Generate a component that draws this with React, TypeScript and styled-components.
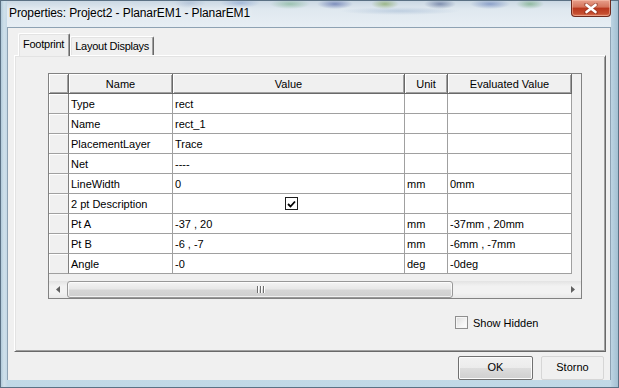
import React from "react";
import styled, { createGlobalStyle } from "styled-components";

const GlobalStyle = createGlobalStyle`
  html, body {
    margin: 0;
    padding: 0;
    background: #dde7ef;
  }
  body {
    font-family: "Liberation Sans", Arial, sans-serif;
  }
`;

const WindowSC = styled.div`
  width: 619px;
  height: 388px;
  box-sizing: border-box;
  padding: 0 8px 8px 7px;
  display: flex;
  flex-direction: column;
  overflow: hidden;
  background:
    radial-gradient(ellipse 18px 5px at 335px 4px, rgba(70, 90, 160, 0.6), transparent),
    radial-gradient(ellipse 14px 5px at 385px 4px, rgba(110, 150, 60, 0.55), transparent),
    radial-gradient(ellipse 16px 5px at 440px 4px, rgba(60, 80, 130, 0.55), transparent),
    radial-gradient(ellipse 20px 5px at 490px 4px, rgba(70, 100, 170, 0.5), transparent),
    radial-gradient(ellipse 14px 5px at 530px 4px, rgba(80, 150, 90, 0.5), transparent),
    radial-gradient(ellipse 20px 5px at 240px 3px, rgba(120, 150, 200, 0.5), transparent),
    radial-gradient(ellipse 20px 5px at 290px 4px, rgba(90, 160, 110, 0.45), transparent),
    radial-gradient(ellipse 16px 5px at 190px 3px, rgba(150, 170, 200, 0.45), transparent),
    radial-gradient(ellipse 60px 4px at 400px 11px, rgba(150, 175, 205, 0.45), transparent),
    linear-gradient(90deg, #a9c4d6 0, #cfe0ea 4px, #c4d8e6 7px, transparent 7px, transparent 611px, #bcd3e2 611px, #9fbdd0 619px),
    linear-gradient(180deg, #c8d6e2 0, #dfe8ef 9px, #e7eef4 27px, #d3e3ee 200px, #c0d8e6 388px);
  box-shadow: inset 0 0 0 1px #5b7184;
`;

const TitleBarSC = styled.div`
  height: 27px;
  flex: none;
  display: flex;
  align-items: flex-start;
  justify-content: space-between;
`;

const TitleTextSC = styled.div`
  padding: 6px 0 0 2px;
  font-size: 12px;
  color: #000;
  letter-spacing: -0.1px;
  text-shadow: 0 0 6px rgba(255, 255, 255, 0.9);
`;

const CloseButtonSC = styled.div`
  width: 40px;
  height: 17px;
  box-sizing: border-box;
  border: 1px solid #6e2a1e;
  border-top: none;
  border-radius: 0 0 4px 4px;
  background: linear-gradient(180deg, #e8a08c 0, #d4735a 45%, #b8361c 50%, #c54e30 85%, #dc7a5c 100%);
  display: flex;
  align-items: center;
  justify-content: center;
  box-shadow: inset 0 0 0 1px rgba(255, 210, 190, 0.45);
`;

const ClientSC = styled.div`
  flex: 1;
  box-sizing: border-box;
  border: 1px solid #8ea2b3;
  border-bottom: none;
  background: #f0f0f0;
  padding: 5px 4px 0 6px;
  display: flex;
  flex-direction: column;
  overflow: hidden;
`;

const TabStripSC = styled.div`
  height: 22px;
  display: flex;
  align-items: flex-end;
  padding-left: 4px;
  position: relative;
  z-index: 1;
`;

const TabSC = styled.div<{ $active?: boolean }>`
  box-sizing: border-box;
  height: ${({ $active }) => ($active ? 23 : 19)}px;
  margin-bottom: ${({ $active }) => ($active ? -1 : 0)}px;
  padding: ${({ $active }) => ($active ? "4px 5px 0 4px" : "3px 4px 0 4px")};
  font-size: 11px;
  letter-spacing: -0.25px;
  color: #000;
  background: #f0f0f0;
  border-top: 1px solid #fff;
  border-left: 1px solid #fff;
  border-right: 1px solid #696969;
  border-radius: 2px 2px 0 0;
  box-shadow: inset -1px 0 0 #a0a0a0, inset 1px 1px 0 #e3e3e3;
  white-space: nowrap;
`;

const PanelSC = styled.div`
  height: 299px;
  box-sizing: border-box;
  border-top: 1px solid #fff;
  border-left: 1px solid #fff;
  border-right: 1px solid #696969;
  border-bottom: 1px solid #696969;
  box-shadow: inset 1px 1px 0 #e3e3e3, inset -1px -1px 0 #a0a0a0;
  padding: 17px 0 0 33px;
  display: flex;
  flex-direction: column;
`;

const GridFrameSC = styled.div`
  width: 534px;
  height: 226px;
  box-sizing: border-box;
  border: 1px solid #828282;
  background: #f0f0f0;
  display: flex;
  flex-direction: column;
`;

const TableSC = styled.div`
  display: grid;
  grid-template-columns: 20px 104px 232px 43px 124px;
  grid-auto-rows: 20px;
`;

const HeadCellSC = styled.div`
  box-sizing: border-box;
  background: #f0f0f0;
  border-right: 1px solid #696969;
  border-bottom: 1px solid #696969;
  box-shadow: inset 1px 1px 0 #fff, inset -1px -1px 0 #a0a0a0;
  font-size: 11px;
  color: #000;
  display: flex;
  align-items: center;
  justify-content: center;
`;

const RowHeadSC = styled.div`
  box-sizing: border-box;
  background: #f0f0f0;
  border-right: 1px solid #808080;
  border-bottom: 1px solid #a0a0a0;
  box-shadow: inset 1px 1px 0 #fff;
`;

const CellSC = styled.div<{ $center?: boolean }>`
  box-sizing: border-box;
  background: #fff;
  border-right: 1px solid #a0a0a0;
  border-bottom: 1px solid #a0a0a0;
  font-size: 11px;
  color: #000;
  padding-left: 2px;
  display: flex;
  align-items: center;
  justify-content: ${({ $center }) => ($center ? "center" : "flex-start")};
  white-space: nowrap;
  overflow: hidden;
`;

const GridCheckSC = styled.div`
  width: 13px;
  height: 13px;
  box-sizing: border-box;
  border: 1px solid #1e1e1e;
  background: #fff;
  display: flex;
  align-items: center;
  justify-content: center;
  margin-left: 4px;
`;

const SpacerSC = styled.div`
  flex: 1;
`;

const ScrollBarSC = styled.div`
  height: 17px;
  display: flex;
  background: linear-gradient(180deg, #e3e3e3 0, #f2f2f2 30%, #f2f2f2 70%, #e8e8e8 100%);
`;

const ArrowSC = styled.div`
  width: 17px;
  flex: none;
  display: flex;
  align-items: center;
  justify-content: center;
`;

const TrackSC = styled.div`
  flex: 1;
  display: flex;
  align-items: stretch;
`;

const ThumbSC = styled.div<{ $width: number }>`
  width: ${({ $width }) => $width}px;
  box-sizing: border-box;
  margin-left: 1px;
  border: 1px solid #989898;
  border-radius: 3px;
  background: linear-gradient(180deg, #f4f4f4 0, #e8e8e8 45%, #d6d6d6 55%, #cfcfcf 100%);
  box-shadow: inset 0 0 0 1px rgba(255, 255, 255, 0.7);
  display: flex;
  align-items: center;
  justify-content: center;
  gap: 2px;
`;

const GripLineSC = styled.span`
  width: 1px;
  height: 7px;
  background: #6e6e6e;
  box-shadow: 1px 0 0 #fff;
`;

const ShowHiddenRowSC = styled.label`
  display: flex;
  align-items: center;
  gap: 5px;
  margin-top: 17px;
  padding-left: 407px;
  font-size: 11px;
  color: #000;
`;

const CheckBoxSC = styled.span`
  width: 13px;
  height: 13px;
  box-sizing: border-box;
  border: 1px solid #8f8f8f;
  background: linear-gradient(135deg, #dcdcdc 0, #f4f4f4 60%, #fff 100%);
  box-shadow: inset 0 0 0 1px #f6f6f6;
`;

const FooterSC = styled.div`
  display: flex;
  justify-content: flex-end;
  gap: 8px;
  padding: 4px 2px 0 0;
`;

const ButtonSC = styled.div<{ $default?: boolean }>`
  height: 24px;
  box-sizing: border-box;
  width: ${({ $default }) => ($default ? 75 : 63)}px;
  border: 1px solid ${({ $default }) => ($default ? "#707070" : "#d6d6d6")};
  border-radius: 2px;
  background: ${({ $default }) =>
    $default ? "linear-gradient(180deg, #f2f2f2 0, #ebebeb 50%, #dddddd 51%, #cfcfcf 100%)" : "#f0f0f0"};
  box-shadow: ${({ $default }) => ($default ? "inset 0 0 0 1px #fcfcfc" : "none")};
  font-size: 11px;
  color: #000;
  display: flex;
  align-items: center;
  justify-content: center;
  padding-bottom: 2px;
`;

type Row = {
  name: string;
  value?: string;
  check?: boolean;
  unit?: string;
  evaluated?: string;
};

const rows: Row[] = [
  { name: "Type", value: "rect" },
  { name: "Name", value: "rect_1" },
  { name: "PlacementLayer", value: "Trace" },
  { name: "Net", value: "----" },
  { name: "LineWidth", value: "0", unit: "mm", evaluated: "0mm" },
  { name: "2 pt Description", check: true },
  { name: "Pt A", value: "-37 , 20", unit: "mm", evaluated: "-37mm , 20mm" },
  { name: "Pt B", value: "-6 , -7", unit: "mm", evaluated: "-6mm , -7mm" },
  { name: "Angle", value: "-0", unit: "deg", evaluated: "-0deg" },
];

const headers = ["", "Name", "Value", "Unit", "Evaluated Value"];

const CloseIcon = () => (
  <svg width="14" height="11" viewBox="0 0 14 11">
    <path d="M2 1.5 L12 9.5 M12 1.5 L2 9.5" stroke="#5a1a10" strokeWidth="4" strokeLinecap="round" opacity="0.35" />
    <path d="M2.5 2 L11.5 9 M11.5 2 L2.5 9" stroke="#fff" strokeWidth="2.6" strokeLinecap="round" />
  </svg>
);

const TickIcon = () => (
  <svg width="9" height="8" viewBox="0 0 9 8">
    <path d="M1 4 L3.5 6.5 L8 1.5" fill="none" stroke="#000" strokeWidth="1.8" />
  </svg>
);

const ArrowIcon: React.FC<{ dir: "left" | "right" }> = ({ dir }) => (
  <svg width="4" height="7" viewBox="0 0 4 7">
    <path d={dir === "left" ? "M4 0 L0 3.5 L4 7 Z" : "M0 0 L4 3.5 L0 7 Z"} fill="#606060" />
  </svg>
);

const PropertyGrid: React.FC = () => (
  <GridFrameSC>
    <TableSC>
      {headers.map((h, i) => (
        <HeadCellSC key={i}>{h}</HeadCellSC>
      ))}
      {rows.map((r) => (
        <React.Fragment key={r.name}>
          <RowHeadSC />
          <CellSC>{r.name}</CellSC>
          {r.check ? (
            <CellSC $center>
              <GridCheckSC>
                <TickIcon />
              </GridCheckSC>
            </CellSC>
          ) : (
            <CellSC>{r.value}</CellSC>
          )}
          <CellSC>{r.unit}</CellSC>
          <CellSC>{r.evaluated}</CellSC>
        </React.Fragment>
      ))}
    </TableSC>
    <SpacerSC />
    <ScrollBarSC>
      <ArrowSC>
        <ArrowIcon dir="left" />
      </ArrowSC>
      <TrackSC>
        <ThumbSC $width={386}>
          <GripLineSC />
          <GripLineSC />
          <GripLineSC />
        </ThumbSC>
      </TrackSC>
      <ArrowSC>
        <ArrowIcon dir="right" />
      </ArrowSC>
    </ScrollBarSC>
  </GridFrameSC>
);

export default function App() {
  return (
    <>
      <GlobalStyle />
      <WindowSC>
        <TitleBarSC>
          <TitleTextSC>Properties: Project2 - PlanarEM1 - PlanarEM1</TitleTextSC>
          <CloseButtonSC>
            <CloseIcon />
          </CloseButtonSC>
        </TitleBarSC>
        <ClientSC>
          <TabStripSC>
            <TabSC $active>Footprint</TabSC>
            <TabSC>Layout Displays</TabSC>
          </TabStripSC>
          <PanelSC>
            <PropertyGrid />
            <ShowHiddenRowSC>
              <CheckBoxSC />
              Show Hidden
            </ShowHiddenRowSC>
          </PanelSC>
          <FooterSC>
            <ButtonSC $default>OK</ButtonSC>
            <ButtonSC>Storno</ButtonSC>
          </FooterSC>
        </ClientSC>
      </WindowSC>
    </>
  );
}
